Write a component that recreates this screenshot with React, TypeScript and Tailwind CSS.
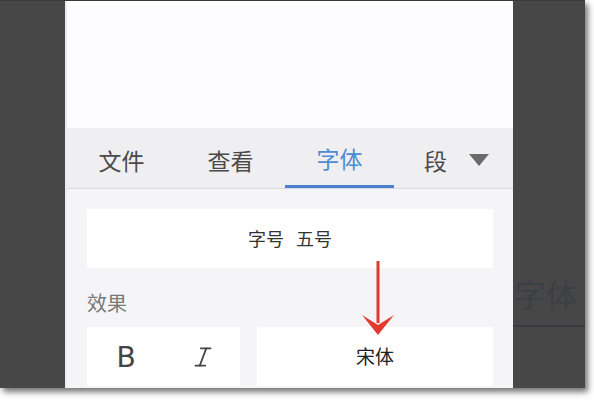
import React from 'react';
import { Italic } from 'lucide-react';

const font = { fontFamily: '"Noto Sans CJK SC", "Noto Sans", sans-serif' };

const tabs = ['文件', '查看', '字体'];

const RedArrow: React.FC = () => (
  <svg
    className="absolute left-[293px] top-[257px]"
    width="36"
    height="80"
    viewBox="0 0 36 80"
  >
    <rect x="16.5" y="3" width="3" height="62" fill="#de3b32" />
    <path d="M2 57 L18 67 L34 57 L18 77 Z" fill="#e23a2e" />
  </svg>
);

export default function App() {
  return (
    <div className="w-[594px] h-[400px] bg-white overflow-hidden" style={font}>
      <div className="w-[585px] h-[388px] bg-[#474747] flex shadow-[3px_4px_6px_rgba(0,0,0,0.55)] border-t border-[#3a3a3a]">
        {/* left backdrop */}
        <div className="w-[65px] shrink-0" />

        {/* phone screen */}
        <div className="w-[448px] shrink-0 flex flex-col relative border-l-2 border-[#ececee]">
          <div className="h-[127px] bg-[#fdfdff]" />

          {/* tab bar */}
          <div className="h-[61px] bg-[#efeff1] border-b border-[#dadadc] flex items-stretch">
            {tabs.map((t, i) => (
              <div
                key={t}
                className={`w-[109px] flex items-center justify-center pt-[4px] text-[23px] ${
                  i === 2 ? 'text-[#4f8ad3] border-b-[3px] border-[#4a80cf]' : 'text-[#4a4a4a]'
                }`}
              >
                {t}
              </div>
            ))}
            <div className="flex-1 flex items-center pl-[30px] gap-[22px] pt-[4px]">
              <span className="text-[23px] text-[#4a4a4a]">段</span>
              <svg width="20" height="13" viewBox="0 0 20 13">
                <path d="M0 0 H20 L10 12 Z" fill="#6a6a6a" />
              </svg>
            </div>
          </div>

          {/* font panel */}
          <div className="flex-1 bg-[#f5f5f7] px-[20px] pt-[20px]">
            <div className="h-[59px] bg-white flex items-center justify-center text-[18px] text-[#333] gap-[12px]">
              <span>字号</span>
              <span>五号</span>
            </div>

            <div className="pt-[25px] text-[20px] leading-none text-[#7a7a7a]">效果</div>

            <div className="mt-[14px] flex gap-[17px]">
              <div className="w-[153px] h-[59px] bg-white flex items-center">
                <span
                  className="w-[76px] text-center text-[30px] text-[#444] pl-[2px]"
                  style={{ fontFamily: 'Roboto, "Noto Sans", sans-serif' }}
                >
                  B
                </span>
                <span className="w-[76px] flex justify-center pl-[4px]">
                  <Italic size={26} strokeWidth={1.6} color="#444" />
                </span>
              </div>
              <div className="flex-1 h-[59px] bg-white flex items-center justify-center text-[19px] text-[#222]">
                宋体
              </div>
            </div>
          </div>

          <RedArrow />
        </div>

        {/* right backdrop with blurred ghost of the tab bar */}
        <div className="flex-1 overflow-hidden flex flex-col">
          <div className="pt-[272px] ml-[1px] text-[32px] leading-tight text-[#3c3f45] whitespace-nowrap">
            字体
          </div>
          <div className="mt-[12px] h-[2px] bg-[#383b41]" />
        </div>
      </div>
    </div>
  );
}
